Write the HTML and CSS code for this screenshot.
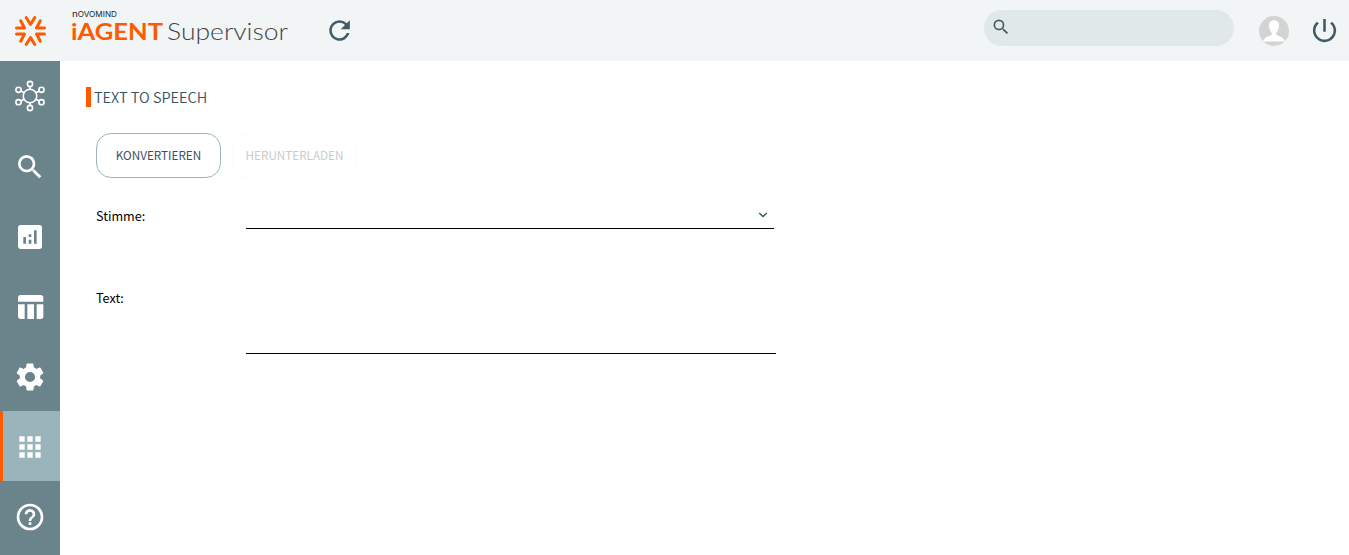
FILE: index.html
```html
<!DOCTYPE html>
<html lang="de">
<head>
  <meta charset="UTF-8" />
  <meta name="viewport" content="width=device-width, initial-scale=1.0"/>
  <title>iAGENT Supervisor</title>
  <link rel="stylesheet" href="styles.css">
</head>
<body>
  <header class="topbar">
    <svg class="brand-mark" viewBox="0 0 32 32">
      <path d="M12.200 2.500l4.300 7 4.300-7M12.200 29.500l4.300-7 4.300 7M2.500 13h8L6.700 5.800M30.500 13h-8l3.800-7.200M2.500 19h8l-3.800 7.200M30.500 19h-8l3.800 7.200"/>
    </svg>
    <svg class="brand-name" viewBox="0 0 220 40">
      <text class="brand-company" x="1" y="8.500" textLength="45" lengthAdjust="spacingAndGlyphs"><tspan class="tall">n</tspan>OVOMIND</text>
      <text class="brand-product" x="0" y="32" textLength="92" lengthAdjust="spacingAndGlyphs">iAGENT</text>
      <text class="brand-module" x="96" y="32" textLength="121" lengthAdjust="spacingAndGlyphs">Supervisor</text>
    </svg>
    <svg class="icon refresh" viewBox="0 0 24 24"><path d="M17.650 6.350A7.960 7.960 0 0 0 12 4a8 8 0 1 0 7.730 10h-2.080A6 6 0 1 1 12 6c1.660 0 3.140.690 4.220 1.780L13 11h7V4z"/></svg>
    <div class="search-box">
      <svg class="icon" viewBox="0 0 24 24"><path d="M15.500 14h-.79l-.28-.27A6.470 6.470 0 0 0 16 9.500 6.500 6.500 0 1 0 9.500 16c1.610 0 3.090-.59 4.230-1.570l.27.280v.79l5 4.990L20.490 19zm-6 0a4.500 4.500 0 1 1 0-9 4.500 4.500 0 0 1 0 9z"/></svg>
    </div>
    <svg class="avatar" viewBox="0 0 30 30">
      <circle cx="15" cy="15" r="15" fill="#d3d3d3"/>
      <path d="M15 4.200c3.200 0 5 2.200 5 5.400 0 3.400-1.300 5.600-2.500 6.900-.5.600-.4 2.300.4 2.700 3.400 1.200 6.800 2.200 8.100 6.300H4c1.300-4.100 4.700-5.100 8.100-6.300.8-.4.900-2.100.4-2.700C11.300 15.200 10 13 10 9.600c0-3.200 1.800-5.400 5-5.400z" fill="#fff"/>
    </svg>
    <svg class="icon power" viewBox="0 0 24 24"><path d="M13 3h-2v10h2zm4.830 2.170l-1.420 1.420A6.920 6.920 0 0 1 19 12a7 7 0 1 1-11.420-5.420L6.170 5.170A8.930 8.930 0 0 0 3 12a9 9 0 1 0 14.830-6.830z"/></svg>
  </header>

  <div class="layout">
    <nav class="sidebar">
      <a class="nav-item">
        <svg class="hub" viewBox="0 0 32 32">
          <circle cx="16" cy="16" r="6.800"/>
          <circle cx="16" cy="4" r="2.600"/><circle cx="16" cy="28" r="2.600"/>
          <circle cx="4.500" cy="9.800" r="2.600"/><circle cx="27.500" cy="9.800" r="2.600"/>
          <circle cx="4.500" cy="22.200" r="2.600"/><circle cx="27.500" cy="22.200" r="2.600"/>
          <path d="M16 6.600v2.600M16 22.800v2.600M6.900 11l3.200 1.700M25.100 11l-3.200 1.700M6.900 21l3.200-1.700M25.100 21l-3.200-1.700"/>
        </svg>
      </a>
      <a class="nav-item">
        <svg class="icon" viewBox="0 0 24 24"><path d="M15.500 14h-.79l-.28-.27A6.470 6.470 0 0 0 16 9.500 6.500 6.500 0 1 0 9.500 16c1.610 0 3.090-.59 4.230-1.570l.27.280v.79l5 4.990L20.490 19zm-6 0a4.500 4.500 0 1 1 0-9 4.500 4.500 0 0 1 0 9z"/></svg>
      </a>
      <a class="nav-item">
        <svg class="icon" viewBox="0 0 24 24"><path fill-rule="evenodd" d="M19 3H5a2 2 0 0 0-2 2v14c0 1.100.9 2 2 2h14a2 2 0 0 0 2-2V5a2 2 0 0 0-2-2zM9 17H7v-5h2zm4 0h-2v-3h2zm0-5h-2v-2h2zm4 5h-2V7h2z"/></svg>
      </a>
      <a class="nav-item">
        <svg class="icon" viewBox="0 0 24 24"><path d="M10 10.020h5V21h-5zM17 21h3a2 2 0 0 0 2-2v-9h-5zm3-18H5a2 2 0 0 0-2 2v3h19V5a2 2 0 0 0-2-2zM3 19c0 1.100.9 2 2 2h3V10H3z"/></svg>
      </a>
      <a class="nav-item">
        <svg class="icon gear" viewBox="0 0 24 24"><path d="M19.140 12.940c.04-.3.060-.61.060-.94 0-.32-.02-.64-.07-.94l2.030-1.580a.49.490 0 0 0 .12-.61l-1.920-3.320a.488.488 0 0 0-.59-.22l-2.390.96c-.5-.38-1.030-.7-1.620-.94l-.36-2.540a.484.484 0 0 0-.48-.41h-3.840c-.24 0-.43.170-.47.410l-.36 2.540c-.59.240-1.130.570-1.620.94l-2.390-.96c-.22-.08-.47 0-.59.220L2.740 8.870c-.12.210-.08.470.12.610l2.030 1.580c-.05.300-.09.630-.09.940s.02.640.07.940l-2.030 1.580a.49.490 0 0 0-.12.610l1.920 3.320c.12.220.37.290.59.220l2.390-.96c.5.380 1.030.7 1.620.94l.36 2.540c.05.240.24.410.48.410h3.840c.24 0 .44-.17.470-.41l.36-2.540c.59-.24 1.130-.56 1.620-.94l2.390.96c.22.080.47 0 .59-.22l1.920-3.320c.12-.22.070-.47-.12-.61zM12 15.600a3.600 3.600 0 1 1 0-7.200 3.600 3.600 0 0 1 0 7.200z"/></svg>
      </a>
      <a class="nav-item active">
        <svg class="icon" viewBox="0 0 24 24"><path d="M4 8h4V4H4zm6 12h4v-4h-4zm-6 0h4v-4H4zm0-6h4v-4H4zm6 0h4v-4h-4zm6-10v4h4V4zm-6 4h4V4h-4zm6 6h4v-4h-4zm0 6h4v-4h-4z"/></svg>
      </a>
      <a class="nav-item">
        <svg class="icon" viewBox="0 0 24 24"><path d="M11 18h2v-2h-2zm1-16a10 10 0 1 0 0 20 10 10 0 0 0 0-20zm0 18a8 8 0 1 1 0-16 8 8 0 0 1 0 16zm0-14a4 4 0 0 0-4 4h2c0-1.100.9-2 2-2s2 .9 2 2c0 2-3 1.750-3 5h2c0-2.250 3-2.500 3-5a4 4 0 0 0-4-4z"/></svg>
      </a>
    </nav>

    <main class="content">
      <h1>TEXT TO SPEECH</h1>
      <div class="buttons">
        <button>KONVERTIEREN</button>
        <button disabled>HERUNTERLADEN</button>
      </div>
      <div class="form-row voice">
        <label>Stimme:</label>
        <div class="select">
          <svg class="chevron" viewBox="0 0 10 6"><path d="M1.200 1L5 4.600 8.800 1"/></svg>
        </div>
      </div>
      <div class="form-row text">
        <label for="text">Text:</label>
        <textarea id="text"></textarea>
      </div>
    </main>
  </div>
</body>
</html>
```
FILE: styles.css
```css
* {
  box-sizing: border-box;
}

body {
  margin: 0;
  height: 100vh;
  overflow: hidden;
  background: #fff;
  color: #000;
  font-family: "Noto Sans CJK JP", "Noto Sans", sans-serif;
  font-size: 12.6px;
}

.topbar {
  display: flex;
  align-items: center;
  height: 61px;
  padding: 0 9px 0 14px;
  background: #f1f5f6;
}

.brand-mark {
  width: 32px;
  height: 32px;
  fill: none;
  stroke: #ff5a00;
  stroke-width: 3;
  stroke-linecap: round;
  stroke-linejoin: round;
}

.brand-name {
  width: 220px;
  height: 40px;
  margin: 0 36px 5px 25px;
  font-family: Lato, sans-serif;
}

.brand-company {
  font-family: Inter, sans-serif;
  font-size: 7.5px;
  fill: #222;
}

.brand-company .tall {
  font-size: 9px;
}

.brand-product {
  font-size: 23.5px;
  font-weight: 700;
  fill: #ff5a00;
}

.brand-module {
  font-size: 24px;
  font-weight: 300;
  fill: #444;
}

.icon {
  display: block;
  width: 32px;
  height: 32px;
  fill: #425b66;
}

.refresh {
  width: 31px;
  height: 31px;
  margin-left: -3px;
}

.search-box {
  width: 250px;
  height: 36px;
  margin: 0 25px 5px auto;
  padding: 7px;
  border-radius: 18px;
  background: #e1e8ea;
}

.search-box .icon {
  width: 20px;
  height: 20px;
}

.avatar {
  width: 30px;
  height: 30px;
  margin-right: 20px;
}

.power {
  width: 31px;
  height: 31px;
}

.layout {
  display: flex;
  height: calc(100vh - 61px);
}

.sidebar {
  width: 60px;
  background: #6b848b;
}

.nav-item {
  display: flex;
  align-items: center;
  justify-content: center;
  height: 70px;
}

.nav-item .icon {
  margin-top: 2px;
  fill: #fff;
}

.nav-item .gear {
  width: 34px;
  height: 34px;
}

.nav-item.active {
  padding-right: 3px;
  border-left: 3px solid #ff5a00;
  background: #9ab4bb;
}

.hub {
  width: 32px;
  height: 32px;
  fill: none;
  stroke: #fff;
  stroke-width: 1.6;
}

.content {
  flex: 1;
  padding: 26px 26px 0;
}

h1 {
  margin: 0;
  padding-left: 3px;
  border-left: 5px solid #ff5a00;
  color: #37535f;
  font-size: 14.5px;
  font-weight: 350;
  line-height: 20px;
}

.buttons {
  display: flex;
  gap: 11px;
  margin: 26px 0 0 10px;
}

button {
  width: 125px;
  height: 45px;
  padding: 0 0 2px;
  border: 1px solid #9ab4bb;
  border-radius: 15px;
  background: #fff;
  color: #37535f;
  font-family: inherit;
  font-size: 11.7px;
}

button:disabled {
  border-color: #fcfcfc;
  color: #c8cccd;
}

.form-row {
  display: flex;
  margin-left: 10px;
}

.form-row label {
  width: 150px;
  line-height: 20px;
}

.voice {
  margin-top: 28px;
}

.select {
  display: flex;
  justify-content: flex-end;
  width: 528px;
  height: 23px;
  padding: 6px 6px 0 0;
  border-bottom: 1px solid #000;
}

.chevron {
  width: 10px;
  height: 6px;
  fill: none;
  stroke: #37535f;
  stroke-width: 1.4;
}

.text {
  margin-top: 59px;
}

textarea {
  width: 530px;
  height: 66px;
  padding: 0;
  border: 0;
  border-bottom: 1px solid #000;
  outline: none;
  background: transparent;
  font: inherit;
  resize: none;
}
```
